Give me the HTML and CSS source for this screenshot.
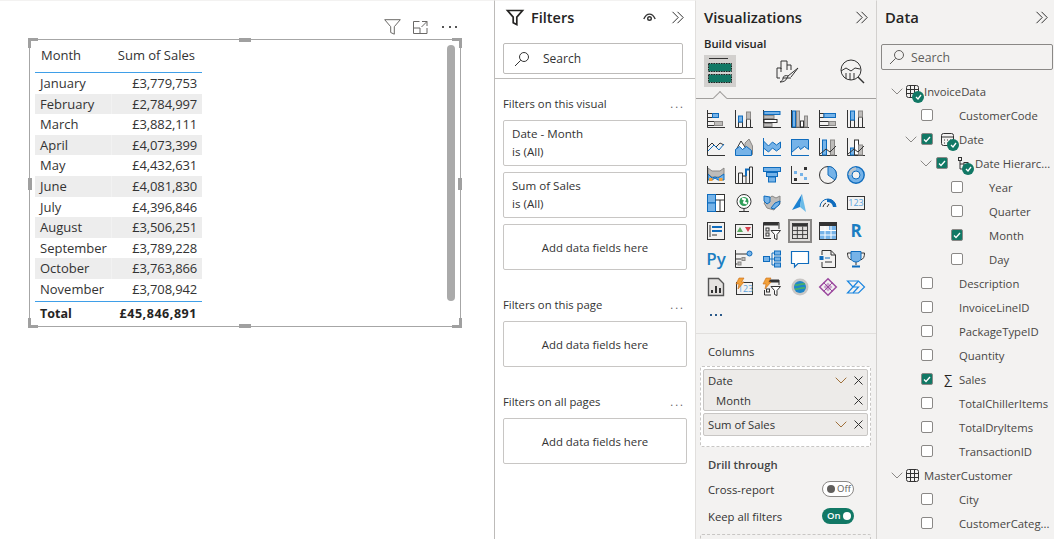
FILE: index.html
```html
<!DOCTYPE html>
<html lang="en">
<head>
<meta charset="utf-8">
<title>Power BI report</title>
<link rel="stylesheet" href="styles.css">
</head>
<body>
<div class="app">
  <main class="canvas">
    <div class="visual-tools">
      <svg class="tool" width="17" height="16" viewBox="0 0 17 16"><path class="t" d="M.7.7h15.600l-6 7v7.500l-3.600-1.700V7.700z"/></svg>
      <svg class="tool" width="15" height="13" viewBox="0 0 15 13"><path class="t" d="M6.500.5H.5v12h13.500V7M.5 7H7v5.500M9 .5h5v4.500M14 .5L8.500 6"/></svg>
      <span class="tool-more"><i></i><i></i><i></i></span>
    </div>
    <section class="visual">
      <i class="h c-tl"></i><i class="h c-tr"></i><i class="h c-bl"></i><i class="h c-br"></i>
      <i class="h m-t"></i><i class="h m-b"></i><i class="h m-l"></i><i class="h m-r"></i>
      <div class="scroll"></div>
      <div class="tbl">
        <div class="tr head"><span>Month</span><span>Sum of Sales</span></div>
        <div class="tr"><span>January</span><span>£3,779,753</span></div>
        <div class="tr alt"><span>February</span><span>£2,784,997</span></div>
        <div class="tr"><span>March</span><span>£3,882,111</span></div>
        <div class="tr alt"><span>April</span><span>£4,073,399</span></div>
        <div class="tr"><span>May</span><span>£4,432,631</span></div>
        <div class="tr alt"><span>June</span><span>£4,081,830</span></div>
        <div class="tr"><span>July</span><span>£4,396,846</span></div>
        <div class="tr alt"><span>August</span><span>£3,506,251</span></div>
        <div class="tr"><span>September</span><span>£3,789,228</span></div>
        <div class="tr alt"><span>October</span><span>£3,763,866</span></div>
        <div class="tr"><span>November</span><span>£3,708,942</span></div>
        <div class="tr total"><span>Total</span><span>£45,846,891</span></div>
      </div>
    </section>
  </main>

  <aside class="filters">
    <header class="f-head">
      <svg width="18" height="17" viewBox="0 0 18 17"><path class="k2" d="M1.500 1.500h15l-5.700 6.600v7.400l-3.600-1.800V8.100z"/></svg>
      <h2>Filters</h2>
      <svg class="eye" width="13" height="9" viewBox="0 0 13 9"><path class="k15" d="M.8 6c3-6.500 8.400-6.500 11.400 0"/><circle class="k15" cx="6.500" cy="5.500" r="1.800"/></svg>
      <svg class="dbl" width="14" height="13" viewBox="0 0 14 13"><path class="k" d="M1.500 .8l5.700 5.700-5.700 5.700M6.500 .8l5.700 5.700-5.700 5.700"/></svg>
    </header>
    <div class="f-search">
      <svg width="16" height="16" viewBox="0 0 16 16"><circle class="k" cx="10" cy="6" r="4.500"/><path class="k" d="M6.700 9.300L1 15"/></svg>
      <span>Search</span>
    </div>
    <div class="f-body">
      <div class="f-title first"><span>Filters on this visual</span><b>...</b></div>
      <div class="f-card"><p>Date - Month</p><p>is (All)</p></div>
      <div class="f-card"><p>Sum of Sales</p><p>is (All)</p></div>
      <div class="f-card add">Add data fields here</div>
      <div class="f-title page"><span>Filters on this page</span><b>...</b></div>
      <div class="f-card add">Add data fields here</div>
      <div class="f-title all"><span>Filters on all pages</span><b>...</b></div>
      <div class="f-card add">Add data fields here</div>
    </div>
  </aside>

  <aside class="viz">
    <header class="p-head"><h2>Visualizations</h2>
      <svg width="14" height="13" viewBox="0 0 14 13"><path class="kb" d="M1.500 .8l5.700 5.700-5.700 5.700M6.500 .8l5.700 5.700-5.700 5.700"/></svg>
    </header>
    <div class="build">Build visual</div>
    <div class="tabs">
      <div class="tab on">
        <svg width="24" height="26" viewBox="0 0 24 26"><path class="k" d="M1 .5h19"/><rect class="gb" x=".5" y="5.500" width="23" height="8"/><rect class="gb" x=".5" y="16.500" width="23" height="8"/></svg>
      </div>
      <div class="tab">
        <svg width="23" height="23" viewBox="0 0 23 23"><path class="k" d="M1 18V8h4v4M5 9V1h6v9M11 5h4v5M15 18H7M1 18h3"/><path class="k" d="M22 8L12 16l-1 2c-1 3-4 4-7 4 2-1 3-2 3-4 0-2 3-3 5-2M22 8l-7 9"/></svg>
      </div>
      <div class="tab">
        <svg width="25" height="25" viewBox="0 0 25 25"><circle class="k" cx="11" cy="11" r="10"/><path class="k" d="M1 12l5-3 5 3 4-3 5 1M6 14v6M10 14v7M14 14v6"/><path class="k15" d="M18 18l6 6"/></svg>
      </div>
    </div>
    <div class="icons">
      <div class="ic"><svg viewBox="0 0 18 18"><path class="k" d="M.5 0v17.500H18"/><path class="k" d="M.5 3.500h5v4h-5M.5 11.500h7v4h-7"/><rect class="bl" x="5.500" y="3.500" width="6" height="4"/><rect class="gr" x="7.500" y="11.500" width="8" height="4"/></svg></div>
      <div class="ic"><svg viewBox="0 0 18 18"><path class="k" d="M.5 0v17.500H18"/><path class="k" d="M3.500 17V12h4v5M11.500 17V9h4v8"/><rect class="bl" x="3.500" y="6" width="4" height="6"/><rect class="gr" x="11.500" y="2" width="4" height="7"/></svg></div>
      <div class="ic"><svg viewBox="0 0 18 18"><path class="k" d="M.5 0v17.500H18"/><rect class="bl" x="1" y="1.500" width="16" height="3"/><rect class="gr" x="1" y="5.500" width="10" height="3"/><rect class="wk" x="1" y="9.500" width="13" height="3"/><rect class="gr" x="1" y="13.500" width="8" height="3"/></svg></div>
      <div class="ic"><svg viewBox="0 0 18 18"><path class="k" d="M.5 0v17.500H18"/><rect class="bl" x="1.500" y="1" width="3" height="16"/><rect class="gr" x="5.500" y="1" width="3" height="16"/><rect class="wk" x="9.500" y="11" width="3" height="6"/><rect class="gr" x="13.500" y="6" width="3" height="11"/></svg></div>
      <div class="ic"><svg viewBox="0 0 18 18"><path class="k" d="M.5 0v17.500H18"/><path class="k" d="M.5 3.500H5v4H.5M.5 11.500H10v4H.500"/><rect class="bl" x="5" y="3.500" width="11.500" height="4"/><rect class="gr" x="10" y="11.500" width="6.500" height="4"/></svg></div>
      <div class="ic"><svg viewBox="0 0 18 18"><path class="k" d="M.5 0v17.500H18"/><path class="k" d="M3.500 17v-7h4v7M11.500 17V7h4v10"/><rect class="bl" x="3.500" y="1" width="4" height="9"/><rect class="gr" x="11.500" y="1" width="4" height="6"/></svg></div>

      <div class="ic"><svg viewBox="0 0 18 18"><path class="k" d="M.5 0v17.500H18"/><path class="k" d="M1 9l4-4 4 4 4-4 4 2"/><path class="kb" d="M1 13l6-6 5 5 5-6"/></svg></div>
      <div class="ic"><svg viewBox="0 0 18 18"><path class="gr" d="M10 16.500V5l4-4 3.500 7v8.500z"/><path class="wk" d="M1 12l5-9 6 9z"/><path class="bl" d="M.5 17.500v-6l4-3 3 3 4-3 5 4v5z"/></svg></div>
      <div class="ic"><svg viewBox="0 0 18 18"><path class="bl" d="M.5 3l5 5 4-4 4 3 4-3v6l-4 3-4-3-4 4-5-4z"/><path class="kb" d="M.5 0v17.500H18"/></svg></div>
      <div class="ic"><svg viewBox="0 0 18 18"><path class="bl" d="M.5 1.500h17v10l-4-3-4 3-2-3-7 6z"/><path class="kb" d="M.5 1v16.500H18"/></svg></div>
      <div class="ic"><svg viewBox="0 0 18 18"><path class="k" d="M.5 0v17.500H18"/><rect class="bl" x="3.500" y="2" width="4" height="15"/><rect class="gr" x="11.500" y="2" width="4" height="15"/><path class="k" d="M1 16l6-5 4 3 6-6"/></svg></div>
      <div class="ic"><svg viewBox="0 0 18 18"><path class="k" d="M.5 0v17.500H18"/><rect class="bl" x="3.500" y="10" width="4" height="7"/><rect class="wk" x="7.500" y="2" width="4" height="15"/><rect class="gr" x="11.500" y="7" width="4" height="10"/><path class="k" d="M1 16l6-5 4 3 6-6"/></svg></div>

      <div class="ic"><svg viewBox="0 0 18 18"><path class="gr" d="M1 2l4 3h8l4-3v6l-4 3H5L1 8z"/><path class="rb" d="M1 8l4 4 3-1 3 1 6-4v6h-6l-3-2-3 2H1z"/><path class="or" d="M2 12h3.500v3H2zM12 12h3.500v3H12z"/><path class="k" d="M.5 0v17.500H18"/></svg></div>
      <div class="ic"><svg viewBox="0 0 18 18"><path class="k" d="M.5 0v17.500H18M3.500 17V7h4v10M7.500 17V10h3.500v7M14.500 17V1h3v16"/><path class="kb2" d="M11 10V3.500h3.500"/></svg></div>
      <div class="ic"><svg viewBox="0 0 18 18"><rect class="bl" x=".5" y="1.500" width="17" height="4"/><rect class="bl" x="3.500" y="6.500" width="11" height="4"/><rect class="bl" x="5.500" y="11" width="7" height="5"/></svg></div>
      <div class="ic"><svg viewBox="0 0 18 18"><path class="k" d="M.5 0v17.500H18"/><rect class="f2" x="3" y="5" width="3" height="3"/><rect class="f2" x="9" y="7" width="3" height="3"/><rect class="f2" x="13" y="11" width="3" height="3"/><rect class="f3" x="13" y="1" width="3" height="3"/><rect class="f3" x="3" y="12" width="3" height="3"/></svg></div>
      <div class="ic"><svg viewBox="0 0 18 18"><circle class="k" cx="9" cy="9" r="8.500"/><path class="bl" d="M9 .5A8.500 8.500 0 0 1 16 14L9 9z"/></svg></div>
      <div class="ic"><svg viewBox="0 0 18 18"><circle class="dn" cx="9" cy="9" r="8.200"/><circle class="dh" cx="9" cy="9" r="4"/><path class="dg" d="M2.800 9A6.200 6.200 0 0 1 9 2.800"/></svg></div>

      <div class="ic"><svg viewBox="0 0 18 18"><rect class="wk" x=".5" y=".5" width="17" height="17"/><rect class="bl" x=".5" y=".5" width="8" height="8.500"/><rect class="bl" x=".5" y="9" width="8" height="8.500"/><path class="k" d="M8.500 6h9M13 6v11.500"/></svg></div>
      <div class="ic"><svg viewBox="0 0 18 18"><circle class="wk" cx="9" cy="7.500" r="7"/><circle class="gl" cx="9" cy="7.500" r="4.500"/><path class="wsm" d="M7 4.500l3 1-1 3 3 1"/><path class="k" d="M9 14.500v3M4 17.500h10"/></svg></div>
      <div class="ic"><svg viewBox="0 0 18 18"><path class="gr" d="M5 5l4-3 4 2 4-2v8l-4 3-2 3-7-2-3-5z"/><path class="bl" d="M1 2l6 1v5l-3 2-3-3zM12 9l5-2-1 4-5 4-3-1z"/></svg></div>
      <div class="ic"><svg viewBox="0 0 18 18"><path class="az" d="M11 0L1 16l8-3z"/><path class="az2" d="M11 0l-2 13 6 5z"/></svg></div>
      <div class="ic"><svg viewBox="0 0 18 18"><path class="kb" d="M1 13A8 8 0 0 1 17 13"/><path class="fb" d="M8 5a8 8 0 0 1 9 8h-3a6 6 0 0 0-6-5z"/><path class="k" d="M4 13a5 5 0 0 1 3-4M8 13l2-3"/></svg></div>
      <div class="ic"><svg viewBox="0 0 18 14" class="wide"><rect class="k" x=".5" y=".5" width="17" height="13"/><text class="n123" x="9" y="10" text-anchor="middle">123</text></svg></div>

      <div class="ic"><svg viewBox="0 0 18 18"><rect class="k" x=".5" y=".5" width="17" height="17"/><path class="k" d="M3 3v12"/><path class="kb2" d="M5 5h10M5 9h10"/><path class="k" d="M5 13h5"/></svg></div>
      <div class="ic"><svg viewBox="0 0 18 14" class="wide"><rect class="k" x=".5" y=".5" width="17" height="13"/><path class="tg" d="M5 3l3 5H2z"/><path class="tr2" d="M10 3h6l-3 5z"/><path class="k" d="M2 10.500h14"/></svg></div>
      <div class="ic"><svg viewBox="0 0 18 18"><path class="k" d="M16 7V.5H.5v16H8"/><rect class="f3" x="1" y="1" width="14.500" height="2.500"/><rect class="k" x="3" y="6" width="3" height="3"/><rect class="k" x="3" y="11" width="3" height="3"/><path class="wk" d="M8 8.500h9.500l-3.500 4v5l-2.500-1v-4z"/></svg></div>
      <div class="ic sel"><svg viewBox="0 0 18 18"><rect class="k" x=".5" y=".5" width="17" height="17"/><rect class="f3" x="1" y="1" width="16" height="3"/><path class="k" d="M1 8.500h16M1 13h16M6 4v13M12 4v13"/></svg></div>
      <div class="ic"><svg viewBox="0 0 18 18"><rect class="k" x=".5" y=".5" width="17" height="17"/><rect class="f3" x="1" y="1" width="16" height="3"/><rect class="f2" x="1" y="9" width="16" height="8"/><rect class="f2" x="10" y="4" width="7" height="5"/><path class="ws" d="M1 8.500h16M1 13h16M6 4v13M12 4v13"/></svg></div>
      <div class="ic"><span class="lang-r">R</span></div>

      <div class="ic"><span class="lang-py">Py</span></div>
      <div class="ic"><svg viewBox="0 0 18 18"><path class="k" d="M.5 0v17.500H18M.5 4h12M.5 9h6M.5 14h2"/><circle class="bl" cx="14.500" cy="3.500" r="2.500"/><rect class="gr" x="7" y="7.500" width="3" height="3"/><rect class="gr" x="3" y="12" width="3" height="3"/></svg></div>
      <div class="ic"><svg viewBox="0 0 18 18"><rect class="bl" x=".5" y="6.500" width="6" height="5"/><rect class="bl" x="11.500" y="1" width="6" height="4"/><rect class="bl" x="11.500" y="7" width="6" height="4"/><rect class="bl" x="11.500" y="13" width="6" height="4"/><path class="kb" d="M6.500 9h5M9 3v12h2.500M9 3h2.500"/></svg></div>
      <div class="ic"><svg viewBox="0 0 18 18"><path class="kbf" d="M.5 1.500h17v12H7l-3.500 3.500v-3.500h-3z"/></svg></div>
      <div class="ic"><svg viewBox="0 0 18 18"><path class="k" d="M3 5V.5h9l4.500 4.500v12.500H3V12M12 .5V5h4.500"/><rect class="fb" x=".5" y="6" width="4" height="4"/><path class="kb" d="M6 8h5"/><path class="k" d="M6 12h7"/></svg></div>
      <div class="ic"><svg viewBox="0 0 18 18"><path class="k" d="M4 3H.5c0 4 1 6 4 7M14 3h3.500c0 4-1 6-4 7M9 12v3"/><path class="bl" d="M4 1.500h10V8c0 2-2 4-5 4s-5-2-5-4z"/><path class="kb2" d="M5 16.500h8"/></svg></div>

      <div class="ic"><svg viewBox="0 0 18 18"><path class="pg" d="M1.500 .5h10l5 5v12h-15z"/><path class="kd" d="M5 15v-3M9 15V8M13 15v-5"/></svg></div>
      <div class="ic"><svg viewBox="0 0 18 18"><rect class="k" x="1.500" y="4.500" width="16" height="12"/><text class="n123" x="10.500" y="14" text-anchor="middle">123</text><path class="bolt" d="M4 0h5L6.500 4H9l-6 7 1-5H1z"/></svg></div>
      <div class="ic"><svg viewBox="0 0 18 18"><path class="k" d="M16 7V2H3M1.500 12v5H8"/><rect class="f3" x="6" y="2" width="10" height="2.500"/><rect class="k" x="3.500" y="11" width="3" height="3"/><path class="wk" d="M8 8.500h9.500l-3.500 4v5l-2.500-1v-4z"/><path class="bolt" d="M3 0h5L5.500 4H8l-6 7 1-5H0z"/></svg></div>
      <div class="ic"><svg viewBox="0 0 18 18"><circle class="arc" cx="9" cy="9" r="8.500"/><circle class="arc2" cx="9" cy="9" r="6"/><path class="arc3" d="M4 7c3 1 6-2 10-1M4 11c3 1 6-2 10-1"/></svg></div>
      <div class="ic"><svg viewBox="0 0 18 18"><path class="pp" d="M9 .7L17.300 9 9 17.300.7 9z"/><path class="pp2" d="M9 4.500L13.500 9 9 13.500 4.500 9z"/><path class="pp3" d="M4.500 4.500L13.500 13.500M13.500 4.500L4.500 13.500"/></svg></div>
      <div class="ic"><svg viewBox="0 0 18 18"><path class="au" d="M.5 3h11l6 6-6 6H.5L6 9z"/><path class="au" d="M6 9h5.500L6 15M11.500 3L6 9"/></svg></div>

      <div class="ic more"><span></span><span></span><span></span></div>
    </div>
    <div class="wells">
      <div class="w-label">Columns</div>
      <div class="drop">
        <div class="well">
          <div class="w-row"><span>Date</span><svg class="chev" width="12" height="7" viewBox="0 0 12 7"><path class="co" d="M.7.7L6 6 11.300.7"/></svg><svg width="9" height="9" viewBox="0 0 9 9"><path class="k" d="M.5.5l8 8M8.500.5l-8 8"/></svg></div>
          <div class="w-row sub"><span>Month</span><svg width="9" height="9" viewBox="0 0 9 9"><path class="k" d="M.5.5l8 8M8.500.5l-8 8"/></svg></div>
        </div>
        <div class="well">
          <div class="w-row"><span>Sum of Sales</span><svg class="chev" width="12" height="7" viewBox="0 0 12 7"><path class="co" d="M.7.7L6 6 11.300.7"/></svg><svg width="9" height="9" viewBox="0 0 9 9"><path class="k" d="M.5.5l8 8M8.500.5l-8 8"/></svg></div>
        </div>
      </div>
      <div class="drill">Drill through</div>
      <div class="opt"><span>Cross-report</span><span class="tog off"><i></i><em>Off</em></span></div>
      <div class="opt keep"><span>Keep all filters</span><span class="tog on"><em>On</em><i></i></span></div>
      <div class="drop tail"></div>
    </div>
  </aside>

  <aside class="data">
    <header class="p-head d"><h2>Data</h2>
      <svg width="14" height="13" viewBox="0 0 14 13"><path class="kb" d="M1.500 .8l5.700 5.700-5.700 5.700M6.500 .8l5.700 5.700-5.700 5.700"/></svg>
    </header>
    <div class="d-search">
      <svg width="16" height="16" viewBox="0 0 16 16"><circle class="g1" cx="10" cy="6" r="4.500"/><path class="g1" d="M6.700 9.300L1 15"/></svg>
      <span>Search</span>
    </div>
    <div class="tree">
      <div class="row t0">
        <svg class="tw" width="12" height="7" viewBox="0 0 12 7"><path class="g2" d="M.7.7L6 6 11.300.7"/></svg>
        <span class="ico"><svg width="13" height="13" viewBox="0 0 13 13"><rect class="k" x=".5" y=".5" width="12" height="12" rx="2"/><path class="k" d="M4.500.5v12M8.500.5v12M.5 4.500h12M.5 8.500h12"/></svg><i class="badge"><svg width="7" height="6" viewBox="0 0 7 6"><path class="wc" d="M1 3l2 2 3-4"/></svg></i></span>
        <span class="lb">InvoiceData</span>
      </div>
      <div class="row t1"><i class="cb"></i><span class="lb">CustomerCode</span></div>
      <div class="row t1d">
        <svg class="tw" width="12" height="7" viewBox="0 0 12 7"><path class="g2" d="M.7.7L6 6 11.300.7"/></svg>
        <i class="cb ck"><svg width="8" height="7" viewBox="0 0 8 7"><path class="wc" d="M1 3.500l2 2 4-4.500"/></svg></i>
        <span class="ico cal"><svg width="13" height="13" viewBox="0 0 13 13"><rect class="k" x=".5" y=".5" width="12" height="12" rx="2"/><path class="k" d="M.5 4h12M3 7h1M6 7h1M9 7h1M3 10h1M6 10h1"/></svg><i class="badge"><svg width="7" height="6" viewBox="0 0 7 6"><path class="wc" d="M1 3l2 2 3-4"/></svg></i></span>
        <span class="lb">Date</span>
      </div>
      <div class="row t2d">
        <svg class="tw" width="12" height="7" viewBox="0 0 12 7"><path class="g2" d="M.7.7L6 6 11.300.7"/></svg>
        <i class="cb ck"><svg width="8" height="7" viewBox="0 0 8 7"><path class="wc" d="M1 3.500l2 2 4-4.500"/></svg></i>
        <span class="ico hier"><svg width="13" height="14" viewBox="0 0 13 14"><rect class="k" x=".5" y=".5" width="3" height="3"/><path class="k" d="M2 3.500V12h4M2 7h4"/><rect class="k" x="6" y="5.500" width="4" height="3"/><rect class="k" x="6" y="10.500" width="4" height="3"/></svg><i class="badge"><svg width="7" height="6" viewBox="0 0 7 6"><path class="wc" d="M1 3l2 2 3-4"/></svg></i></span>
        <span class="lb">Date Hierarc...</span>
      </div>
      <div class="row t3"><i class="cb"></i><span class="lb">Year</span></div>
      <div class="row t3"><i class="cb"></i><span class="lb">Quarter</span></div>
      <div class="row t3"><i class="cb ck"><svg width="8" height="7" viewBox="0 0 8 7"><path class="wc" d="M1 3.500l2 2 4-4.500"/></svg></i><span class="lb">Month</span></div>
      <div class="row t3"><i class="cb"></i><span class="lb">Day</span></div>
      <div class="row t1"><i class="cb"></i><span class="lb">Description</span></div>
      <div class="row t1"><i class="cb"></i><span class="lb">InvoiceLineID</span></div>
      <div class="row t1"><i class="cb"></i><span class="lb">PackageTypeID</span></div>
      <div class="row t1"><i class="cb"></i><span class="lb">Quantity</span></div>
      <div class="row t1"><i class="cb ck"><svg width="8" height="7" viewBox="0 0 8 7"><path class="wc" d="M1 3.500l2 2 4-4.500"/></svg></i><span class="sig">∑</span><span class="lb">Sales</span></div>
      <div class="row t1"><i class="cb"></i><span class="lb">TotalChillerItems</span></div>
      <div class="row t1"><i class="cb"></i><span class="lb">TotalDryItems</span></div>
      <div class="row t1"><i class="cb"></i><span class="lb">TransactionID</span></div>
      <div class="row t0">
        <svg class="tw" width="12" height="7" viewBox="0 0 12 7"><path class="g2" d="M.7.7L6 6 11.300.7"/></svg>
        <span class="ico"><svg width="13" height="13" viewBox="0 0 13 13"><rect class="k" x=".5" y=".5" width="12" height="12" rx="2"/><path class="k" d="M4.500.5v12M8.500.5v12M.5 4.500h12M.5 8.500h12"/></svg></span>
        <span class="lb">MasterCustomer</span>
      </div>
      <div class="row t1"><i class="cb"></i><span class="lb">City</span></div>
      <div class="row t1"><i class="cb"></i><span class="lb">CustomerCateg...</span></div>
    </div>
  </aside>
</div>
</body>
</html>
```
FILE: styles.css
```css
* { box-sizing: border-box; }
html, body { margin: 0; padding: 0; height: 100%; overflow: hidden; background: #fff; }
body { font-family: "Open Sans", "Noto Sans", sans-serif; font-size: 11.3px; color: #333; }
h2, p { margin: 0; }
svg { display: block; flex: none; overflow: visible; }

.k { fill: none; stroke: #333; stroke-width: 1; }
.k15 { fill: none; stroke: #333; stroke-width: 1.4; }
.t { fill: none; stroke: #6b6967; stroke-width: 1; }
.k2 { fill: none; stroke: #252423; stroke-width: 1.7; }
.kb { fill: none; stroke: #0f6cbd; stroke-width: 1; }
.p-head .kb { stroke: #333; }
.kb2 { fill: none; stroke: #0f6cbd; stroke-width: 2; }
.kbf { fill: #fff; stroke: #0f6cbd; stroke-width: 1.2; }
.bl { fill: #76b3e8; stroke: #0f6cbd; stroke-width: 1; }
.gr { fill: #bebcba; stroke: #8a8886; stroke-width: 1; }
.wk { fill: #fff; stroke: #333; stroke-width: 1; }
.rb { fill: #76b3e8; stroke: #0f6cbd; }
.or { fill: #f2a13a; }
.fb { fill: #0f6cbd; }
.f2 { fill: #76b3e8; }
.f3 { fill: #333; }
.dn { fill: #76b3e8; stroke: #0f6cbd; stroke-width: 1.4; }
.dh { fill: #f3f2f1; stroke: #0f6cbd; stroke-width: 1; }
.dg { fill: none; stroke: #b9c3cc; stroke-width: 3; }
.gl { fill: #2f9e58; }
.wsm { fill: none; stroke: #fff; stroke-width: 2; }
.az { fill: #1b82d2; }
.az2 { fill: #6bbbe8; }
.n123 { font-size: 9px; fill: #5ba3dc; font-family: "Open Sans", sans-serif; }
.tg { fill: #5aa85f; }
.tr2 { fill: #d9414f; }
.ws { fill: none; stroke: #fff; stroke-width: 1; }
.pg { fill: #e4e2e0; stroke: #555; stroke-width: 1.4; }
.kd { fill: none; stroke: #333; stroke-width: 2; }
.bolt { fill: #f2a13a; stroke: #c96a10; stroke-width: .6; }
.arc { fill: #c8c6c4; }
.arc2 { fill: #1f86c8; }
.arc3 { fill: none; stroke: #47b06a; stroke-width: 1.6; }
.pp { fill: none; stroke: #9c4a9f; stroke-width: 1.5; }
.pp2 { fill: #c9a3cc; }
.pp3 { stroke: #9c4a9f; stroke-width: 1; }
.au { fill: none; stroke: #1a86e0; stroke-width: 1.2; }
.co { fill: none; stroke: #a0703a; stroke-width: 1; }
.g1 { fill: none; stroke: #605e5c; stroke-width: 1; }
.g2 { fill: none; stroke: #8a8886; stroke-width: 1; }
.wc { fill: none; stroke: #fff; stroke-width: 1.3; }
.gb { fill: #117865; stroke: #222; stroke-width: 1; stroke-dasharray: 1.5 1; }

.app { display: flex; width: 1054px; height: 539px; overflow: hidden; }

/* canvas */
.canvas { position: relative; width: 495px; flex: none; background: #fff; border-top: 1px solid #f3f2f1; border-right: 1px solid #bdbbb9; }
.visual-tools { position: absolute; left: 384px; top: 18px; display: flex; align-items: center; gap: 12px; }
.tool-more { display: flex; gap: 4.5px; margin-left: 2px; }
.tool-more i { display: block; width: 2px; height: 2px; background: #555; }
.visual { position: absolute; left: 29px; top: 38px; width: 432px; height: 288px; border: 1px solid #a6a6a6; }
.h { position: absolute; display: block; background: #a0a0a0; }
.c-tl, .c-tr, .c-bl, .c-br { width: 10px; height: 10px; background: none; border: 0 solid #a0a0a0; }
.c-tl { left: -2px; top: -2px; border-width: 3px 0 0 3px; }
.c-tr { right: -2px; top: -2px; border-width: 3px 3px 0 0; }
.c-bl { left: -2px; bottom: -2px; border-width: 0 0 3px 3px; }
.c-br { right: -2px; bottom: -2px; border-width: 0 3px 3px 0; }
.m-t, .m-b { left: 209px; width: 12px; height: 4px; }
.m-t { top: -2px; }
.m-b { bottom: -2px; }
.m-l, .m-r { top: 138px; width: 4px; height: 12px; }
.m-l { left: -2px; }
.m-r { right: -2px; }
.scroll { position: absolute; left: 417px; top: 5px; width: 8px; height: 256px; border-radius: 4px; background: #aaa; }
.tbl { position: absolute; left: 5px; top: 1px; width: 167px; font-size: 13px; color: #333; }
.tr { display: grid; grid-template-columns: 77px 1fr; height: 20.62px; line-height: 20px; }
.tr span { padding-left: 5px; white-space: nowrap; }
.tr span:last-child { text-align: right; padding: 0 5px 0 0; letter-spacing: -.15px; }
.alt { background: #ededed; }
.alt span:first-child { border-right: 1px solid #f2f2f2; }
.head { height: 32px; line-height: 29px; border-bottom: 1px solid #3f9fe8; }
.tr.head span:first-child { padding-left: 6px; }
.tr.head span:last-child { padding-right: 7px; letter-spacing: 0; }
.total { margin-top: 1px; height: 25px; line-height: 23px; font-size: 12.5px; font-weight: 700; color: #252423; border-top: 1px solid #3f9fe8; }
.tr.total span:last-child { letter-spacing: .55px; padding-right: 5px; }

/* filters */
.filters { width: 200px; flex: none; background: #fff; border-top: 1px solid #f3f2f1; }
.f-head { display: flex; align-items: center; height: 32px; padding: 0 10px 0 11px; }
.f-head h2 { font-size: 14.5px; font-weight: 600; color: #252423; margin-left: 7px; flex: 1; }
.eye { margin-right: 15px; }
.f-search { display: flex; align-items: center; height: 31px; margin: 10px 12px 0 8px; border: 1px solid #bdbbb9; border-radius: 2px; padding-left: 10px; gap: 13px; font-size: 12px; }
.f-body { margin-top: 4px; border-top: 1px solid #bdbbb9; padding: 0 8px; height: 440px; }
.f-title { display: flex; justify-content: space-between; align-items: center; padding-right: 4px; height: 16px; }
.f-title b { font-weight: 400; color: #605e5c; font-size: 11px; letter-spacing: 2px; margin-right: -2px; }
.f-title.first { margin-top: 16px; margin-bottom: 9px; }
.f-title.page { margin-top: 26px; margin-bottom: 9px; }
.f-title.all { margin-top: 26px; margin-bottom: 9px; }
.f-card { border: 1px solid #c8c6c4; border-radius: 2px; height: 46px; margin-bottom: 6px; padding: 4px 8px; line-height: 18px; font-size: 11.6px; }
.f-card.add { display: flex; align-items: center; justify-content: center; margin-bottom: 0; font-size: 11.4px; padding-top: 5px; }

/* viz */
.viz { width: 181px; flex: none; background: #f3f2f1; border-top: 1px solid #f3f2f1; border-left: 1px solid #e1dfdd; }
.p-head { display: flex; align-items: center; justify-content: space-between; height: 32px; padding: 0 7px 0 8px; }
.p-head h2 { font-size: 14.8px; font-weight: 600; color: #252423; }
.build { font-size: 11.3px; font-weight: 600; color: #252423; margin: 3px 0 0 8px; height: 16px; line-height: 16px; }
.tabs { display: flex; height: 44px; margin-top: 3px; padding-left: 8px; border-bottom: 1px solid #a19f9d; position: relative; }
.tabs::after { content: ""; position: absolute; left: 19px; bottom: -5px; width: 9px; height: 9px; background: #f3f2f1; border: solid #a19f9d; border-width: 1px 0 0 1px; transform: rotate(45deg); }
.tab { width: 32px; height: 32px; display: flex; align-items: center; justify-content: center; }
.tab.on { background: #d2d0ce; }
.tab:nth-child(2) { margin-left: 35px; }
.tab:nth-child(3) { margin-left: 33px; }
.icons { display: grid; grid-template-columns: repeat(6, 28px); grid-auto-rows: 28px; padding: 6px 0 0 6px; height: 235px; border-bottom: 1px solid #e1dfdd; }
.ic { display: flex; align-items: center; justify-content: center; }
.ic svg { width: 18px; height: 18px; }
.ic svg.wide { height: 14px; }
.ic.sel { margin: 2px; background: #e1dfdd; border: 2px solid #8a8886; }
.ic.sel svg { width: 16px; height: 16px; }
.lang-r { font-size: 17px; font-weight: 700; color: #1b7ec2; line-height: 18px; }
.lang-py { font-size: 17px; font-weight: 600; color: #1b7ec2; line-height: 18px; }
.more { gap: 3px; }
.more span { width: 2px; height: 2px; background: #2b5a8a; }
.wells { padding: 0 5px 0 4px; }
.w-label { margin: 10px 0 0 8px; height: 16px; line-height: 16px; }
.drop { margin-top: 6px; height: 81px; border: 1px dashed #c8c6c4; background: #fff; padding: 2px; display: flex; flex-direction: column; gap: 2px; border-radius: 2px; }
.well { background: #edebe9; border: 1px solid #c8c6c4; border-radius: 2px; padding: 0 4px; }
.w-row { display: flex; align-items: center; height: 20px; }
.w-row span { flex: 1; }
.w-row.sub span { padding-left: 8px; }
.chev { margin-right: 7px; }
.well .w-row:only-child { height: 21px; }
.drill { margin: 10px 0 0 8px; font-weight: 600; height: 16px; line-height: 16px; color: #444; }
.opt { display: flex; align-items: center; justify-content: space-between; margin: 8px 17px 0 8px; height: 16px; }
.opt.keep { margin-top: 11px; }
.tog { display: flex; align-items: center; width: 32px; height: 16px; border-radius: 8px; font-size: 9.5px; }
.tog i { width: 8px; height: 8px; border-radius: 50%; display: block; flex: none; }
.tog em { font-style: normal; line-height: 10px; }
.tog.off { border: 1px solid #8a8886; background: #fff; padding-left: 4px; gap: 2px; color: #605e5c; }
.tog.off i { background: #605e5c; }
.tog.on { background: #117865; color: #fff; padding: 0 3px 0 5px; justify-content: space-between; font-weight: 600; }
.tog.on i { background: #fff; }
.drop.tail { margin-top: 10px; height: 30px; background: transparent; }

/* data */
.data { flex: 1; min-width: 0; background: #f3f2f1; border-top: 1px solid #f3f2f1; border-left: 1px solid #d2d0ce; }
.p-head.d { padding: 0 5px 0 8px; }
.d-search { display: flex; align-items: center; height: 26px; margin: 11px 1px 0 4px; border: 1px solid #8a8886; border-radius: 2px; padding-left: 7px; gap: 6px; font-size: 12.3px; color: #605e5c; }
.tree { margin-top: 9px; }
.row { display: flex; align-items: center; height: 24px; white-space: nowrap; color: #484644; }
.cb { display: flex; align-items: center; justify-content: center; flex: none; width: 12px; height: 12px; border: 1px solid #8a8886; border-radius: 2px; background: #fff; }
.cb.ck { background: #117865; }
.t0 { padding-left: 14px; }
.t0 .ico { margin-left: 3px; margin-right: 5px; }
.t1 { padding-left: 44px; }
.t1 .lb { margin-left: 26px; }
.t1 .sig + .lb { margin-left: 4px; }
.sig { margin-left: 8px; width: 14px; font-size: 13px; color: #252423; line-height: 14px; text-align: center; }
.t1d { padding-left: 28px; }
.t1d .cb { margin-left: 4px; }
.t1d .ico { margin-left: 8px; margin-right: 5px; }
.t2d { padding-left: 43px; }
.t2d .cb { margin-left: 4px; }
.t2d .ico { margin-left: 10px; margin-right: 4px; }
.t3 { padding-left: 74px; }
.t3 .lb { margin-left: 26px; }
.ico { position: relative; display: block; flex: none; width: 13px; height: 13px; }
.badge { position: absolute; left: 6px; top: 6px; width: 12px; height: 12px; border-radius: 50%; background: #117865; display: flex; align-items: center; justify-content: center; }
.hier .badge { left: 4px; }
.lb { font-size: 11.3px; }
```
